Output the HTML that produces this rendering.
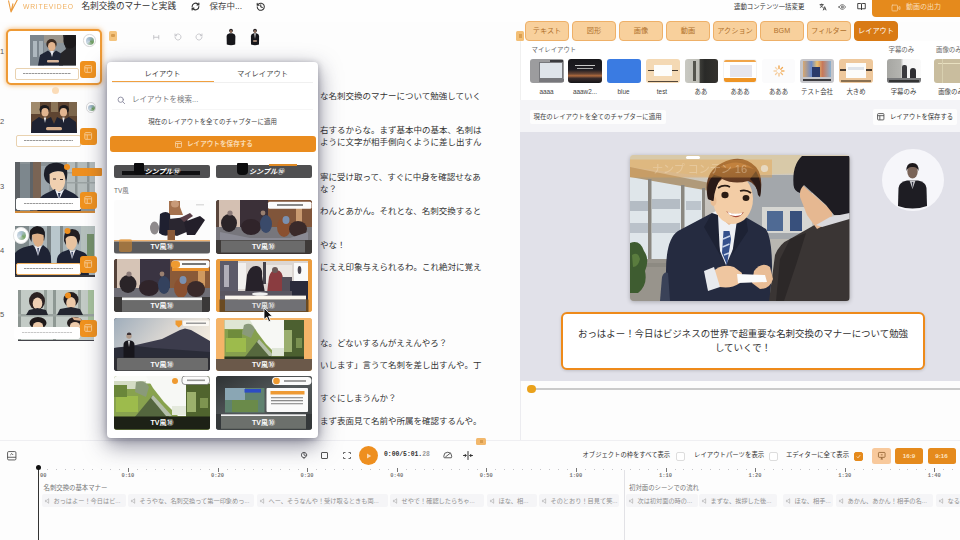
<!DOCTYPE html>
<html lang="ja">
<head>
<meta charset="utf-8">
<title>WriteVideo</title>
<style>
*{box-sizing:border-box;margin:0;padding:0}
html,body{width:960px;height:540px;overflow:hidden;background:#fdfdfd}
body{position:relative;font-family:"Liberation Sans","Noto Sans CJK JP",sans-serif;color:#333;font-size:8px;line-height:1}
.abs{position:absolute}
.t{position:absolute;white-space:nowrap;line-height:1}
svg{position:absolute;overflow:visible}
.or{background:#ee8f1f}
/* top bar */
#top{position:absolute;left:0;top:0;width:960px;height:22px;background:#fefefe}
/* sidebar */
#side{position:absolute;left:0;top:22px;width:104px;height:416px;background:#fdfdfd}
.num{position:absolute;left:0;font-size:7.5px;color:#555}
.sbtn{position:absolute;width:16.5px;height:16.5px;border-radius:3px;background:#f0921e}
.sbtn svg{left:4px;top:4.2px;opacity:.85}
.sub{position:absolute;background:#fff;border:1px solid #e9d2b0;border-radius:2px}
.sub i{position:absolute;left:7px;right:7px;top:50%;height:1px;margin-top:-1px;background:repeating-linear-gradient(90deg,#999 0 2px,#ccc 2px 3px)}
.av{position:absolute;border-radius:50%;background:#fff;border:1px solid #d8d8d8;overflow:hidden}
/* editor */
#editor{position:absolute;left:104px;top:22px;width:390px;height:416px;background:#fefefe}
.ln{position:absolute;left:320px;font-size:8.5px;color:#333;white-space:nowrap;line-height:1;letter-spacing:0}
/* popup */
#popup{position:absolute;left:107px;top:62px;width:211px;height:376px;background:#fff;border-radius:4px;box-shadow:0 7px 22px rgba(40,40,70,.55),0 1px 6px rgba(20,20,40,.3);overflow:hidden}
.cell{position:absolute;width:96px;height:53.5px;border-radius:3px;overflow:hidden;background:#888}
.cell svg{filter:blur(.6px)}
#side>svg{filter:blur(.4px);overflow:hidden}
.cell .lb{position:absolute;left:0;right:0;bottom:0;height:12.5px;background:rgba(70,70,70,.88);color:#fff;font-size:7px;font-weight:bold;text-align:center;line-height:12.5px}
/* right */
#right{position:absolute;left:520px;top:41px;width:440px;height:400px;background:#fff}
.tab{position:absolute;top:20.5px;width:44px;height:20.5px;border-radius:4px;background:#f8d09c;border:1px solid #eeb068;color:#b0702c;font-size:7.2px;text-align:center;line-height:18.6px}
.tab.on{background:#d97a14;border-color:#d97a14;color:#fff}
.th{position:absolute;top:58.5px;height:24px;border-radius:3px;overflow:hidden}
.thl{position:absolute;top:88.5px;font-size:6.4px;color:#444;text-align:center;width:50px;white-space:nowrap}
/* timeline */
#tl{position:absolute;left:0;top:440px;width:960px;height:100px;background:#fdfdfd;box-shadow:inset 0 1px 0 #efeff2}
.tk{position:absolute;top:27.5px;width:1px;height:4px;background:#777}
.tkl{position:absolute;top:34px;font-family:"Liberation Mono",monospace;font-size:5.4px;color:#777;font-weight:bold}
.clip{position:absolute;top:54px;height:13px;background:#f5f5f7;border-radius:2px;color:#909090;font-size:6.2px;line-height:13px;white-space:nowrap;overflow:hidden;padding-left:3px}
.ck{position:absolute;top:11.700px;width:9px;height:9px;border:1px solid #ddd;border-radius:2px;background:#fff}
</style>
</head>
<body>
<div id="top">
  <svg style="left:7px;top:-1px" width="13" height="15" viewBox="0 0 13 15"><path d="M1.5 1.5 L4 13 L10.5 0.5 M4 13 L6 4.5" fill="none" stroke="#eb9a3c" stroke-width="1.1" stroke-linejoin="round"/></svg>
  <div class="t" style="left:22.5px;top:3.6px;font-size:6.6px;letter-spacing:.75px;color:#f0b060;transform:scaleX(1.03);transform-origin:0 0">WRITEVIDEO</div>
  <div class="t" style="left:81.5px;top:2px;font-size:8.6px;color:#333">名刺交換のマナーと実践</div>
  <svg style="left:190.5px;top:2px" width="9" height="9" viewBox="0 0 24 24" fill="none" stroke="#333" stroke-width="3" stroke-linecap="round" stroke-linejoin="round"><path d="M3 12a9 9 0 0 1 15-6.7L21 8M21 3v5h-5M21 12a9 9 0 0 1-15 6.7L3 16M3 21v-5h5"/></svg>
  <div class="t" style="left:209.5px;top:2px;font-size:8.5px;color:#444">保存中...</div>
  <svg style="left:256px;top:1.5px" width="9.5" height="9.5" viewBox="0 0 24 24" fill="none" stroke="#333" stroke-width="2.6" stroke-linecap="round" stroke-linejoin="round"><path d="M3 12a9 9 0 1 0 3-6.7L3 8M3 3v5h5M12 7v5l4 2"/></svg>
  <div class="t" style="left:734px;top:4px;font-size:6.4px;color:#333">連動コンテンツ一括変更</div>
  <svg style="left:818.5px;top:2.5px" width="8" height="8" viewBox="0 0 24 24" fill="none" stroke="#444" stroke-width="2.6" stroke-linecap="round" stroke-linejoin="round"><path d="M3 5h10M8 3v2M5 5c0 4 3 7 7 8M11 5c0 4-3 7-7 8M13 21l4-10 4 10M14.5 18h5"/></svg>
  <svg style="left:837.5px;top:2.5px" width="8.5" height="8" viewBox="0 0 24 24" fill="none" stroke="#555" stroke-width="2.4" stroke-linecap="round" stroke-linejoin="round"><path d="M2 12s4-7 10-7 10 7 10 7-4 7-10 7S2 12 2 12z"/><circle cx="12" cy="12" r="3"/></svg>
  <svg style="left:856.5px;top:2px" width="9" height="9" viewBox="0 0 24 24" fill="none" stroke="#333" stroke-width="2.4" stroke-linecap="round" stroke-linejoin="round"><path d="M3 4h7a2 2 0 0 1 2 2v14a2 2 0 0 0-2-2H3zM21 4h-7a2 2 0 0 0-2 2v14a2 2 0 0 1 2-2h7z"/></svg>
  <div class="abs" style="left:872px;top:0;width:88px;height:17px;background:#e58a1c;border-radius:0 0 0 4px"></div>
  <svg style="left:890.500px;top:3.500px" width="10" height="8" viewBox="0 0 26 22" fill="none" stroke="#f7d4a8" stroke-width="2" stroke-linecap="round" stroke-linejoin="round"><rect x="2" y="3" width="15" height="16" rx="2"/><path d="M20 9l4-2v8l-4-2"/></svg>
  <div class="t" style="left:906px;top:3px;font-size:7px;color:#fadfba">動画の出力</div>
</div>
<div class="tab" style="left:525px">テキスト</div>
<div class="tab" style="left:572px">図形</div>
<div class="tab" style="left:619px">画像</div>
<div class="tab" style="left:666px">動画</div>
<div class="tab" style="left:713px">アクション</div>
<div class="tab" style="left:760px">BGM</div>
<div class="tab" style="left:807px">フィルター</div>
<div class="tab on" style="left:854px">レイアウト</div>
<div class="abs" style="left:516px;top:31px;width:8px;height:10px;border-radius:1.5px;background:#f3bf76"><div class="abs" style="left:2.5px;top:3px;width:3px;height:3.500px;background:#c98a3a;opacity:.6"></div></div>
<div id="right">
  <div class="abs" style="left:0;top:0;width:440px;height:59px;background:#fff;border-left:1px solid #f0f0f0"></div>
  <div class="abs" style="left:0;top:59px;width:440px;height:32px;background:#f4f4f7"></div>
  <div class="abs" style="left:0;top:91px;width:440px;height:249px;background:#e1e1e9"></div>
  <div class="abs" style="left:0;top:340px;width:440px;height:60px;background:#fdfdfd;border-left:1px solid #ececf0"></div>
  <div class="t" style="left:11.500px;top:6px;font-size:6.400px;color:#666">マイレイアウト</div>
  <div class="t" style="left:368.500px;top:6px;font-size:6.400px;color:#666">字幕のみ</div>
  <div class="t" style="left:416px;top:6px;font-size:6.400px;color:#666">画像のみ</div>
</div>
<!-- thumbs (page coords) -->
<div class="th" style="left:529.500px;width:34px;background:#9c9c9e"><div class="abs" style="left:9px;top:3.500px;width:24px;height:17px;background:#dfe4ea;border:1px solid #77787c"></div><div class="abs" style="left:20px;top:1px;width:13px;height:2.500px;background:#3a3a3e"></div><div class="abs" style="left:9px;top:20px;width:25px;height:3px;background:#77777b"></div></div>
<div class="th" style="left:568px;width:33.500px;background:linear-gradient(180deg,#17171b 0,#1e1c22 45%,#6a4634 62%,#b06a3c 70%,#3a2c2c 80%,#141418 100%)"><div class="abs" style="left:7px;top:6px;width:20px;height:1px;background:#c8c8c8"></div><div class="abs" style="left:9px;top:9px;width:16px;height:1px;background:#aaa"></div></div>
<div class="th" style="left:607px;width:33.500px;background:#3a7be2"></div>
<div class="th" style="left:645.500px;width:34px;background:#f4d9b4"><div class="abs" style="left:8px;top:6px;width:18px;height:11px;background:#fdfdfb"></div><div class="abs" style="left:2px;top:11px;width:6px;height:1.500px;background:#443a30"></div><div class="abs" style="left:26px;top:11px;width:6px;height:1.500px;background:#443a30"></div><div class="abs" style="left:2px;top:22px;width:30px;height:1.500px;background:#55483a"></div></div>
<div class="th" style="left:684.500px;width:33px;background:linear-gradient(90deg,#c9c9c2 0,#bdbdb6 42%,#3a3a36 47%,#2a2a28 60%,#34322e 100%)"><div class="abs" style="left:8px;top:2px;width:3px;height:20px;background:#55554e"></div></div>
<div class="th" style="left:723px;width:34px;background:#fff;border:1px solid #f3f3f3"><div class="abs" style="left:0;top:0;width:34px;height:2.500px;background:#f0a54a"></div><div class="abs" style="left:6px;top:5px;width:22px;height:12px;background:#e6e6ee"></div><div class="abs" style="left:0;bottom:0;width:34px;height:3.500px;background:#ee9424"></div></div>
<div class="th" style="left:762px;width:33px;background:#fbfbfc"><svg style="left:10.500px;top:6px" width="12" height="12" viewBox="-6 -6 12 12" stroke-linecap="round" stroke-width="1.300"><g stroke="#f0a040"><path d="M0 -5v2.500"/><path d="M3.500 -3.500l-1.700 1.700" opacity=".9"/><path d="M5 0h-2.500" opacity=".8"/><path d="M3.500 3.500l-1.700 -1.700" opacity=".7"/><path d="M0 5v-2.500" opacity=".6"/><path d="M-3.500 3.500l1.700 -1.700" opacity=".5"/><path d="M-5 0h2.500" opacity=".45"/><path d="M-3.500 -3.500l1.700 1.700" opacity=".4"/></g></svg></div>
<div class="th" style="left:800px;width:34px;background:#c6c6ca"><div class="abs" style="left:3px;top:2.500px;width:28px;height:16px;background:linear-gradient(90deg,#d8a870,#6a8ac8 30%,#e8c070 50%,#c87858 70%,#8ab0d0)"></div><div class="abs" style="left:12px;top:8px;width:8px;height:10px;background:#2a3a6a"></div><div class="abs" style="left:3px;top:20px;width:28px;height:2px;background:#3a3a3e"></div></div>
<div class="th" style="left:839px;width:34px;background:#eec89c"><div class="abs" style="left:7px;top:4px;width:20px;height:15px;background:#fcfcfa"></div><div class="abs" style="left:1px;top:10.500px;width:6px;height:1.500px;background:#4a3c30"></div><div class="abs" style="left:27px;top:10.500px;width:6px;height:1.500px;background:#4a3c30"></div><div class="abs" style="left:9px;top:8px;width:16px;height:3px;background:#dfe4ea"></div><div class="abs" style="left:2px;top:21.500px;width:30px;height:1.500px;background:#8a7050"></div></div>
<div class="th" style="left:886.500px;width:34px;background:linear-gradient(90deg,#a6a6a2 0,#b4b4b0 40%,#f4f4f4 48%,#fafafa 100%)"><div class="abs" style="left:15px;top:6px;width:5px;height:14px;background:#3a3a3e;border-radius:2px 2px 0 0"></div><div class="abs" style="left:23px;top:9px;width:6px;height:12px;background:#2e2e32;border-radius:3px 3px 0 0"></div><div class="abs" style="left:0;top:19px;width:34px;height:5px;background:#77787a"></div><div class="abs" style="left:2px;top:21.500px;width:30px;height:1.500px;background:#333"></div></div>
<div class="th" style="left:934px;width:34px;background:#c9bd9e"><div class="abs" style="left:4px;top:4px;width:26px;height:1px;background:#e8e0c0"></div><div class="abs" style="left:8px;top:0;width:1px;height:24px;background:#d8d0b0"></div></div>
<div class="thl" style="left:521.500px">aaaa</div>
<div class="thl" style="left:560px">aaaw2...</div>
<div class="thl" style="left:598.500px">blue</div>
<div class="thl" style="left:637px">test</div>
<div class="thl" style="left:676px">ああ</div>
<div class="thl" style="left:715px">あああ</div>
<div class="thl" style="left:753.500px">あああ</div>
<div class="thl" style="left:792px">テスト会社</div>
<div class="thl" style="left:831px">大きめ</div>
<div class="thl" style="left:878.500px">字幕のみ</div>
<div class="thl" style="left:926px">画像のみ</div>
<!-- action row -->
<div class="abs" style="left:529.500px;top:109.500px;width:136px;height:14.500px;background:#fdfdfd;border-radius:2px"></div>
<div class="t" style="left:533.500px;top:114.200px;font-size:6.420px;color:#444">現在のレイアウトを全てのチャプターに適用</div>
<div class="abs" style="left:872.500px;top:108.500px;width:84px;height:16.500px;background:#fdfdfd;border-radius:2px"></div>
<svg style="left:877px;top:113px" width="7.500" height="7.500" viewBox="0 0 9 9" fill="none" stroke="#444" stroke-width="1"><rect x=".7" y=".7" width="7.600" height="7.600" rx="1"/><path d="M.7 3.200h7.600M3.400 3.200v5"/></svg>
<div class="t" style="left:890px;top:114.200px;font-size:6.300px;color:#333">レイアウトを保存する</div>
<!-- main image -->
<svg style="left:630px;top:155px;border-radius:4px;overflow:hidden;box-shadow:0 1px 4px rgba(0,0,0,.25)" width="219.500" height="146" viewBox="0 0 219.500 146">
  <defs>
    <linearGradient id="bg1" x1="0" y1="0" x2="0" y2="1"><stop offset="0" stop-color="#d9cdb6"/><stop offset=".25" stop-color="#c9c6c0"/><stop offset="1" stop-color="#b9b5ae"/></linearGradient>
    <linearGradient id="hair" x1="0" y1="0" x2="0" y2="1"><stop offset="0" stop-color="#8a5428"/><stop offset=".6" stop-color="#5a3420"/><stop offset="1" stop-color="#2a1c18"/></linearGradient>
  </defs>
  <rect width="219.500" height="146" fill="url(#bg1)"/>
  <!-- ceiling -->
  <path d="M0 0 H170 V18 L80 22 L0 12Z" fill="#d8c9a8"/>
  <rect x="56" y="1" width="14" height="3" rx="1.500" fill="#fff"/><rect x="138" y="26" width="14" height="3" rx="1.500" fill="#f4f4f0"/>
  <!-- windows -->
  <path d="M0 20 L74 34 V106 H0Z" fill="#dfe6ea"/>
  <path d="M0 12 L80 28 V36 L0 22Z" fill="#b09a7a"/>
  <rect x="18" y="24" width="3.500" height="84" fill="#8a8780"/><rect x="51" y="30" width="3.500" height="78" fill="#8a8780"/><rect x="72" y="33" width="3" height="74" fill="#8a8780"/>
  <rect x="0" y="46" width="18" height="10" fill="#b4bcc4"/><rect x="22" y="44" width="28" height="10" fill="#b4bcc4"/><rect x="56" y="46" width="15" height="9" fill="#bcc4cc"/>
  <rect x="0" y="68" width="18" height="10" fill="#bac2ca"/><rect x="22" y="68" width="28" height="10" fill="#bac2ca"/>
  <path d="M0 104 H76 V146 H0Z" fill="#98948c"/>
  <path d="M0 108 H40 V112 H0Z" fill="#8d8a82"/>
  <!-- plant -->
  <path d="M0 88 Q10 84 14 96 Q20 104 15 116 Q18 130 8 138 L0 138Z" fill="#3e5c30"/>
  <path d="M2 100 Q8 96 10 104 Q8 112 3 112Z" fill="#5a7c3e"/>
  <!-- back wall board -->
  <rect x="116" y="20" width="66" height="86" fill="#a3a7ab"/>
  <rect x="132" y="52" width="50" height="26" fill="#d6d6d2"/>
  <rect x="137" y="56" width="16" height="20" fill="#4f6a94"/><rect x="160" y="56" width="12" height="20" fill="#38507c"/>
  <rect x="130" y="84" width="54" height="30" fill="#b9b7b1"/>
  <!-- centre man -->
  <path d="M34 146 L36 116 Q36 84 48 76 L82 58 L96 66 L112 60 L136 74 Q142 84 142 112 L140 146Z" fill="#252b40"/>
  <path d="M30 146 L32 122 Q34 116 38 118 L40 146Z" fill="#3a4258"/>
  <path d="M82 58 L90 96 L96 110 L104 92 L112 62 L104 56 L90 54Z" fill="#eef0f4"/>
  <path d="M93.500 76 L99.500 76 L101 84 L97 110 L92 98Z" fill="#34508c"/>
  <path d="M93 84 l7 -3 M92.500 92 l7 -3 M94 100 l5 -2" stroke="#c8d4ea" stroke-width="1.400"/>
  <path d="M88 60 L82 58 L74 72 L90 100Z M108 58 L116 62 L118 76 L102 100Z" fill="#1d2234"/>
  <!-- neck/face -->
  <path d="M90 50 H108 V64 L99 70 L90 62Z" fill="#e6b890"/>
  <ellipse cx="103" cy="44" rx="20" ry="25" fill="#f3cda6"/>
  <ellipse cx="83.500" cy="46" rx="3" ry="5" fill="#e9bd94"/>
  <path d="M78 44 Q72 18 92 8 Q112 -2 126 12 Q134 22 130 42 Q126 28 118 26 Q104 30 92 24 Q84 30 83 46Z" fill="url(#hair)"/>
  <path d="M90 12 Q108 2 124 14 Q112 10 100 14Z" fill="#a86a34"/>
  <path d="M78 44 Q75 28 84 20 L92 22 Q85 30 83.500 46Z" fill="#2a1a16"/><path d="M130 42 Q133 28 126 16 L120 24 Q127 30 128 40Z" fill="#2a1a16"/><ellipse cx="95" cy="40" rx="3.600" ry="3.200" fill="#2a1c14"/><ellipse cx="116" cy="43" rx="3.400" ry="3" fill="#2a1c14"/>
  <path d="M88 33 q6 -4 12 -1 M110 36 q6 -2 11 2" stroke="#2a1c14" stroke-width="1.800" fill="none"/>
  <path d="M96 56 Q104 62 114 57 Q106 68 96 56Z" fill="#a84a3a"/><path d="M97.500 57 Q104 60 112.500 57.700 L111 60 Q104 62 99 59.500Z" fill="#fff"/>
  <!-- right man (back) -->
  <path d="M139 146 L145 100 Q150 88 160 84 L188 68 L219.500 60 V146Z" fill="#3a3534"/>
  <path d="M160 84 L176 78 L166 110 L154 146 H146 L150 104Z" fill="#2c2828"/>
  <path d="M170 28 L202 56 L202 66 L187 74 L177 60 L170 42Z" fill="#e6b891"/>
  <path d="M163.500 30 Q162 10 172 1 H219.500 V60 L204 60 L196 50 L174 30 Q170 34 170 38 Q164 36 163.500 30Z" fill="#1e1c22"/>
  <path d="M186 70 L200 62 L219.500 58 V64 L192 72Z" fill="#d9d9dd"/>
  <!-- hands & card -->
  <path d="M82 118 Q90 108 104 112 L112 118 L110 128 Q98 136 84 130Z" fill="#efc6a0"/>
  <path d="M74 116 L84 112 L90 132 L78 136Z" fill="#e8eaee"/>
  <path d="M124 116 Q132 106 140 112 L143 124 Q140 134 130 134 L122 128Z" fill="#e9bd96"/>
  <path d="M107 119 L135 120 L137 127 L108 128Z" fill="#fbfbfb"/>
  <!-- faint orange overlay -->
  <rect x="0" y="4.500" width="142" height="18" fill="#e8a24a" opacity=".42"/>
  <text x="22" y="17.500" font-size="11" fill="#f4e2c8" opacity=".4" font-family="Liberation Sans, Noto Sans CJK JP, sans-serif">ナンプ コンテン  16</text>
  <circle cx="134.500" cy="13.500" r="3.600" fill="#e8e0d0" opacity=".8"/>
</svg>
<!-- avatar circle -->
<div class="abs" style="left:881.500px;top:149px;width:62px;height:62px;border-radius:50%;background:#f6f6fa"></div>
<svg style="left:897px;top:162px" width="31" height="48" viewBox="0 0 31 48">
  <ellipse cx="15.500" cy="9.500" rx="5.200" ry="7" fill="#7a6458"/>
  <path d="M9.500 9 Q9 1 15.500 1 Q22 1 21.500 9 Q20 4.500 15.500 5 Q11 4.500 9.500 9Z" fill="#1c181a"/>
  <path d="M1 44 L1.500 26 Q2 20 10 18.500 L21 18.500 Q29 20 29.500 26 L30 44 Q15.500 49 1 44Z" fill="#1e1d23"/>
  <path d="M12.500 18.500 L15.500 27 L18.500 18.500Z" fill="#c8c8cc"/><path d="M14.800 20 L15.500 27 L16.300 20Z" fill="#3a3a48"/>
</svg>
<!-- subtitle box -->
<div class="abs" style="left:561px;top:312px;width:364px;height:57.500px;border:2px solid #ee8a1a;border-radius:6px;background:#fff;box-shadow:0 1px 3px rgba(0,0,0,.15)"></div>
<div class="t" style="left:561px;width:364px;top:329px;text-align:center;font-size:9.450px;color:#333">おっはよー！今日はビジネスの世界で超重要な名刺交換のマナーについて勉強</div>
<div class="t" style="left:561px;width:364px;top:343px;text-align:center;font-size:9.450px;color:#333">していくで！</div>
<!-- progress -->
<div class="abs" style="left:531px;top:388.200px;width:429px;height:1.600px;background:#cbcbcb"></div>
<div class="abs" style="left:527px;top:384.500px;width:8.500px;height:8.500px;border-radius:50%;background:#eaa21c"></div>
<div id="side" style="top:0;height:440px;background:none">
  <div class="num" style="top:48px">1</div>
  <div class="num" style="top:118px">2</div>
  <div class="num" style="top:183px">3</div>
  <div class="num" style="top:247px">4</div>
  <div class="num" style="top:311px">5</div>
  <!-- scene 1 (selected) -->
  <div class="abs" style="left:6px;top:29px;width:95.5px;height:55.5px;border:2px solid #ee9a35;border-radius:5px;background:#fff;box-shadow:0 0 5px rgba(238,143,31,.7)"></div>
  <svg style="left:30px;top:35px" width="46" height="30.5" viewBox="0 0 46 30.5" preserveAspectRatio="none">
    <rect width="46" height="30.5" fill="#8b949b"/>
    <rect x="0" y="0" width="14" height="30.5" fill="#7c868e"/>
    <rect x="3" y="6" width="4" height="16" fill="#aeb8bf"/><rect x="9" y="6" width="4" height="16" fill="#a5afb6"/>
    <rect x="14" y="0" width="20" height="8" fill="#9a958d"/>
    <ellipse cx="21.5" cy="9" rx="5.2" ry="5" fill="#3a2a22"/>
    <ellipse cx="21.8" cy="11.5" rx="3.8" ry="4.6" fill="#e3b48e"/>
    <path d="M8 30.5 L10 20 L18 15.5 L22 19 L26 15.5 L32 19 L33 30.5Z" fill="#1f2536"/>
    <path d="M20.2 16 L22 22 L23.8 16Z" fill="#e8e8ee"/>
    <rect x="17" y="25" width="12" height="2.6" rx="1" fill="#d9b69a"/>
    <path d="M33 0 H46 V30.5 H29 L31 18 L36 14 L34 8Z" fill="#252427"/>
    <ellipse cx="40" cy="6" rx="6.5" ry="7.5" fill="#1b191b"/>
  </svg>
  <div class="av" style="left:83px;top:34px;width:12.5px;height:12.5px"><div class="abs" style="left:2px;top:2px;width:8px;height:8px;border-radius:50%;background:conic-gradient(#9ab3c4,#6c9a5a,#c8d6e2,#9ab3c4)"></div></div>
  <div class="sub" style="left:15px;top:68px;width:64px;height:11.5px"><i></i></div>
  <div class="sbtn" style="left:79.500px;top:61.200px"><svg width="8.400" height="8" viewBox="0 0 9 9" fill="none" stroke="#fbd9ae" stroke-width="1"><rect x=".7" y=".7" width="7.6" height="7.6" rx="1"/><path d="M.7 3.2h7.6M3.4 3.2v5"/></svg></div>
  <div class="abs" style="left:51.5px;top:87px;width:7px;height:7px;border-radius:50%;background:#fbdcb8"></div>
  <!-- scene 2 -->
  <svg style="left:31px;top:101.5px" width="46" height="31" viewBox="0 0 46 31" preserveAspectRatio="none">
    <rect width="46" height="31" fill="#5e4431"/>
    <rect x="0" y="0" width="9" height="12" fill="#a08a6c"/><rect x="20" y="0" width="7" height="10" fill="#8b7558"/><rect x="38" y="0" width="8" height="14" fill="#7c664c"/>
    <ellipse cx="13.5" cy="7.5" rx="5" ry="4.6" fill="#1d1a1c"/><ellipse cx="14" cy="10.2" rx="3.6" ry="4.2" fill="#e2b590"/>
    <ellipse cx="33" cy="7.5" rx="5" ry="4.6" fill="#1d1a1c"/><ellipse cx="32.5" cy="10.2" rx="3.6" ry="4.2" fill="#e2b590"/>
    <path d="M0 31 L1 20 L8 15 L14 18 L20 15 L23 22 L26 15 L32 18 L38 15 L45 20 L46 31Z" fill="#1e2232"/>
    <path d="M12.8 15.5 L14 21 L15.2 15.5Z M31.3 15.5 L32.5 21 L33.7 15.5Z" fill="#e6e6ea"/>
    <rect x="15" y="25" width="16" height="3.2" rx="1.5" fill="#d8b08e"/>
  </svg>
  <div class="av" style="left:85.5px;top:102px;width:10.5px;height:10.5px"><div class="abs" style="left:1.5px;top:1.5px;width:6.5px;height:6.5px;border-radius:50%;background:conic-gradient(#9ab3c4,#6c9a5a,#c8d6e2,#9ab3c4)"></div></div>
  <div class="sub" style="left:16px;top:134.5px;width:64.5px;height:12px"><i></i></div>
  <div class="sbtn" style="left:80px;top:128px"><svg width="8.400" height="8" viewBox="0 0 9 9" fill="none" stroke="#fbd9ae" stroke-width="1"><rect x=".7" y=".7" width="7.6" height="7.6" rx="1"/><path d="M.7 3.2h7.6M3.4 3.2v5"/></svg></div>
  <!-- scene 3 -->
  <svg style="left:15px;top:161.5px" width="80" height="51" viewBox="0 0 80 51" preserveAspectRatio="none">
    <rect width="80" height="51" fill="#8a9296"/>
    <rect x="0" y="0" width="5" height="51" fill="#5c6064"/>
    <rect x="5" y="2" width="10" height="34" fill="#7d878d"/>
    <rect x="15" y="0" width="3" height="51" fill="#5f6468"/>
    <rect x="18" y="0" width="8" height="51" fill="#7a6454"/>
    <rect x="26" y="4" width="8" height="30" fill="#9aa4aa"/>
    <rect x="52" y="0" width="28" height="40" fill="#b4bcbc"/>
    <rect x="60" y="0" width="2.500" height="40" fill="#8f9797"/><rect x="72" y="0" width="2.500" height="40" fill="#8f9797"/>
    <rect x="52" y="10" width="28" height="1.500" fill="#9aa2a2"/><rect x="52" y="20" width="28" height="1.500" fill="#9aa2a2"/>
    <path d="M29 14 Q28 3 38 1 Q49 -1 52 8 Q53 14 51 19 L48 10 Q42 8 36 11 Q34 16 35 22 Q30 20 29 14Z" fill="#1c1e28"/>
    <path d="M34.500 12 Q40 8 48 10 Q51 14 50 21 Q49 28 43 30 Q37 29 35 22Z" fill="#f0d0b0"/>
    <path d="M38 17 h3 M45 17.500 h3" stroke="#2a2228" stroke-width="1"/>
    <path d="M22 51 L24 38 Q26 33 34 30 L40 27 L44 33 L50 27 L58 31 Q64 34 65 40 L66 51Z" fill="#1e2436"/>
    <path d="M40 27.500 L44 38 L49 27.500 L44 30Z" fill="#eceef2"/>
    <path d="M43 31 L44 38 L45.500 31Z" fill="#2e3a5a"/>
    <circle cx="52" cy="5" r="3" fill="#ee8f1f"/>
  </svg>
  <div class="abs or" style="left:71.5px;top:168px;width:30px;height:8px;border-radius:1px"></div>
  <div class="sub" style="left:16px;top:198px;width:64.5px;height:12px;border-color:#fff"><i></i></div>
  <div class="abs" style="left:15px;top:210.5px;width:80px;height:2px;background:#d08a3a"></div>
  <div class="sbtn" style="left:80px;top:192px"><svg width="8.400" height="8" viewBox="0 0 9 9" fill="none" stroke="#fbd9ae" stroke-width="1"><rect x=".7" y=".7" width="7.6" height="7.6" rx="1"/><path d="M.7 3.2h7.6M3.4 3.2v5"/></svg></div>
  <!-- scene 4 -->
  <svg style="left:15px;top:225.5px" width="80" height="51" viewBox="0 0 80 51" preserveAspectRatio="none">
    <rect width="80" height="51" fill="#a9b4b8"/>
    <rect x="0" y="0" width="14" height="51" fill="#7f8a8c"/>
    <rect x="32" y="0" width="4" height="51" fill="#7c8587"/><rect x="36" y="0" width="9" height="40" fill="#b9c7cc"/><rect x="45" y="0" width="3" height="51" fill="#7f898b"/>
    <rect x="66" y="0" width="14" height="40" fill="#b5c0bd"/><rect x="72" y="8" width="7" height="22" fill="#74906a"/>
    <path d="M14.500 12 Q13.500 1 22 0 Q30.500 0 30 10 L29 15 Q22 6 17 9 L16.500 16Z" fill="#1c1a1e"/>
    <path d="M17 9 Q22 6 28.500 9 Q29.500 15 27 19 Q24 22 21 20.500 Q17.500 17 17 9Z" fill="#dcae86"/>
    <path d="M0 51 L0 27 Q4 22 12 20.500 L18 19 L23 26 L28 19 L33 23 Q36 27 36 34 L37 51Z" fill="#1e2334"/>
    <path d="M19.500 19.500 L23 30 L26.500 19.500 L23 21Z" fill="#e6e6ec"/><path d="M22.300 22 L23 30 L24 22Z" fill="#3a4668"/>
    <path d="M49 15 Q48 4 57 3 Q65.500 3 65 13 L63 19 Q62 11 57 11 Q52 11 51 19Z" fill="#221d21"/>
    <path d="M50.500 13 Q52 9.500 57 10 Q61.500 10 62 15 Q62 21 58 24 Q54 25 51.500 21Z" fill="#e9c3a0"/>
    <path d="M41 51 L42 33 Q43 27 50 25 L54 23.500 L57 29 L61 23.500 L68 26 Q73 28 73 34 L74 51Z" fill="#1f2436"/>
    <path d="M54.500 24 L57 33 L60.500 24 L57 25.500Z" fill="#e6e6ec"/><path d="M56.400 26 L57 33 L58 26Z" fill="#3a4668"/>
    <circle cx="52.5" cy="5" r="3" fill="#ee8f1f"/>
    <rect x="81" y="2" width="5" height="6" rx="1" fill="#ee8f1f"/>
  </svg>
  <div class="av" style="left:12.5px;top:227px;width:16.5px;height:16.5px;border-color:#e4e4e4"><div class="abs" style="left:3px;top:3px;width:9px;height:9px;border-radius:50%;background:conic-gradient(#a9c0cf,#79a566,#d3dee8,#a9c0cf)"></div></div>
  <div class="sub" style="left:16px;top:262.5px;width:64.5px;height:12.5px;border-color:#f0b060"><i></i></div>
  <div class="abs" style="left:15px;top:275px;width:80px;height:1.5px;background:#3a3a40"></div>
  <div class="sbtn" style="left:80px;top:256px"><svg width="8.400" height="8" viewBox="0 0 9 9" fill="none" stroke="#fbd9ae" stroke-width="1"><rect x=".7" y=".7" width="7.6" height="7.6" rx="1"/><path d="M.7 3.2h7.6M3.4 3.2v5"/></svg></div>
  <!-- scene 5 -->
  <svg style="left:17.5px;top:289.5px" width="76" height="51" viewBox="0 0 76 51" preserveAspectRatio="none">
    <rect width="76" height="51" fill="#c3cbc6"/>
    <rect x="0" y="0" width="3" height="51" fill="#8d9692"/><rect x="26" y="0" width="3" height="25" fill="#98a29c"/><rect x="35" y="0" width="3" height="51" fill="#8e9893"/><rect x="60" y="0" width="3" height="25" fill="#98a29c"/><rect x="70" y="0" width="6" height="30" fill="#a6c09c"/>
    <rect x="0" y="24" width="76" height="2.5" fill="#9aa39f"/>
    <ellipse cx="19" cy="11" rx="8" ry="9" fill="#2c2222"/><ellipse cx="19.5" cy="13.5" rx="4.8" ry="6" fill="#efd0b4"/>
    <path d="M8 25 L11 20 L19.5 18 L28 20 L30 25Z" fill="#23252e"/>
    <ellipse cx="53" cy="9.5" rx="7.5" ry="7.5" fill="#231d1f"/><ellipse cx="53" cy="13" rx="4.8" ry="6" fill="#ecc9a8"/>
    <path d="M39 25 L42 19 L53 17 L62 19 L65 25Z" fill="#22252f"/>
    <circle cx="50" cy="5.5" r="3" fill="#ee8f1f"/>
    <ellipse cx="20" cy="33" rx="8.5" ry="6" fill="#1f1a1b"/><ellipse cx="20" cy="36.5" rx="5.2" ry="4.5" fill="#eccaaa"/>
    <ellipse cx="57" cy="33" rx="8" ry="6" fill="#251d1e"/><ellipse cx="57" cy="36.5" rx="5.2" ry="4.5" fill="#eccaaa"/>
    <path d="M54 27 L62 28 L64 31 L56 30Z" fill="#d9b08e"/>
  </svg>
  <div class="sub" style="left:14px;top:326.5px;width:66px;height:12.5px;border-color:#fff"><i style="background:repeating-linear-gradient(90deg,#c8c8c8 0 2px,#e5e5e5 2px 3px)"></i></div>
  <div class="abs" style="left:17.5px;top:339.5px;width:76px;height:1.5px;background:#44444a"></div>
  <div class="sbtn" style="left:80px;top:320px"><svg width="8.400" height="8" viewBox="0 0 9 9" fill="none" stroke="#fbd9ae" stroke-width="1"><rect x=".7" y=".7" width="7.6" height="7.6" rx="1"/><path d="M.7 3.2h7.6M3.4 3.2v5"/></svg></div>
</div>
<div id="editor" style="top:0;height:440px;background:none">
  <div class="abs" style="left:4.5px;top:31px;width:8.5px;height:9.5px;border-radius:1.5px;background:#f4c47e"><div class="abs" style="left:2.5px;top:2.5px;width:3.5px;height:3px;background:#c98a3a;opacity:.7;border-radius:1px"></div></div>
  <svg style="left:48.500px;top:34px" width="6.500" height="6.500" viewBox="0 0 9 9" fill="none" stroke="#b9b9bd" stroke-width="1.1"><path d="M1 1.5v6M8 1.5v6M1 4.5h7"/></svg>
  <svg style="left:69.5px;top:33px" width="8" height="8" viewBox="0 0 24 24" fill="none" stroke="#c2c2c6" stroke-width="2.6" stroke-linecap="round" stroke-linejoin="round"><path d="M3 12a9 9 0 1 0 3-6.7L3 8M3 3v5h5"/></svg>
  <svg style="left:91px;top:33px" width="8" height="8" viewBox="0 0 24 24" fill="none" stroke="#c2c2c6" stroke-width="2.6" stroke-linecap="round" stroke-linejoin="round"><path d="M21 12a9 9 0 1 1-3-6.7L21 8M21 3v5h-5"/></svg>
  <svg style="left:121.5px;top:28px" width="10" height="18" viewBox="0 0 10 18"><circle cx="5" cy="2.6" r="1.9" fill="#2a2526"/><ellipse cx="5" cy="3.4" rx="1.3" ry="1.5" fill="#8a6a58"/><path d="M.8 16.5 L.6 8 Q.8 5.6 3.6 5.2 L6.4 5.2 Q9.2 5.6 9.4 8 L9.2 16.5 Q5 18 .8 16.5Z" fill="#17171b"/></svg>
  <svg style="left:145.5px;top:28px" width="10" height="18" viewBox="0 0 10 18"><circle cx="5" cy="2.6" r="1.9" fill="#2a2526"/><ellipse cx="5" cy="3.4" rx="1.3" ry="1.5" fill="#8a6a58"/><path d="M1 16.5 L.9 8 Q1 5.6 3.6 5.2 L6.4 5.2 Q9 5.6 9.1 8 L9 16.5 Q5 18 1 16.5Z" fill="#17171b"/><path d="M4.2 5.4 L5 11 L5.8 5.4Z" fill="#ddd"/><rect x="3.2" y="12" width="3.6" height="2" fill="#9a8070"/></svg>
</div>
<div class="ln" style="top:91.8px">な名刺交換のマナーについて勉強していく</div>
<div class="ln" style="top:125.5px">右するからな。まず基本中の基本、名刺は</div>
<div class="ln" style="top:137.8px">ように文字が相手側向くように差し出すん</div>
<div class="ln" style="top:172.5px">寧に受け取って、すぐに中身を確認せなあ</div>
<div class="ln" style="top:185.3px">な？</div>
<div class="ln" style="top:207.3px">わんとあかん。それとな、名刺交換すると</div>
<div class="ln" style="top:241.3px">やな！</div>
<div class="ln" style="top:263px">にええ印象与えられるわ。これ絶対に覚え</div>
<div class="ln" style="top:339px">な。どないするんがええんやろ？</div>
<div class="ln" style="top:360.5px">いします」言うて名刺を差し出すんや。丁</div>
<div class="ln" style="top:394px">すぐにしまうんか？</div>
<div class="ln" style="top:416.5px">まず表面見て名前や所属を確認するんや。</div>
<div id="tl">
<svg style="left:7px;top:10.500px" width="9.500" height="9.500" viewBox="0 0 10 10" fill="none" stroke="#444" stroke-width=".9"><rect x=".6" y=".6" width="8.800" height="8.800" rx="1.200"/><path d="M.6 6.600h8.800M3.500 4.200l1.500 -1.500 1.500 1.500"/></svg>
<svg style="left:300px;top:11px" width="8" height="8" viewBox="0 0 24 24" fill="none" stroke="#555" stroke-width="2.600" stroke-linecap="round"><circle cx="12" cy="12" r="8"/><path d="M12 4v8l5 3"/><path d="M12 20v3"/></svg>
<div class="abs" style="left:321px;top:12px;width:7px;height:7px;border:1px solid #555;border-radius:1px"></div>
<svg style="left:342.500px;top:12px" width="8" height="7" viewBox="0 0 8 7" fill="none" stroke="#555" stroke-width=".9"><path d="M.5 2v-1.500h2M5.500 .5h2v1.500M7.500 5v1.500h-2M2.500 6.500h-2v-1.500"/></svg>
<div class="abs" style="left:358.500px;top:6px;width:19px;height:19px;border-radius:50%;background:#ee8f1f"></div>
<svg style="left:365.500px;top:12.500px" width="6" height="6" viewBox="0 0 6 6"><path d="M1 .5l4.200 2.500 -4.200 2.500z" fill="#fbd9b0"/></svg>
<div class="t" style="left:384px;top:12.200px;font-family:'Liberation Mono',monospace;font-size:6.400px;font-weight:bold;color:#333;letter-spacing:-.02px">0:00/5:01.<span style="color:#999">28</span></div>
<svg style="left:442.500px;top:11px" width="9.500" height="8" viewBox="0 0 24 20" fill="none" stroke="#555" stroke-width="2.400" stroke-linejoin="round"><path d="M3 17a8 8 0 0 1-1-4 10 10 0 0 1 20 0 8 8 0 0 1-1 4zM6 15L19 5"/></svg>
<svg style="left:463px;top:10.500px" width="10" height="9" viewBox="0 0 20 18" fill="none" stroke="#333" stroke-width="2" stroke-linecap="round" stroke-linejoin="round"><path d="M10 1v16M1 9h5M4 6.500L6.500 9 4 11.500M19 9h-5M16 6.500L13.500 9 16 11.500"/></svg>
<div class="t" style="left:582.500px;top:11.700px;font-size:6.320px;color:#333">オブジェクトの枠をすべて表示</div>
<div class="ck" style="left:676px"></div>
<div class="t" style="left:694px;top:11.700px;font-size:6.400px;color:#333">レイアウトパーツを表示</div>
<div class="ck" style="left:769px"></div>
<div class="t" style="left:786px;top:11.700px;font-size:6.350px;color:#333">エディターに全て表示</div>
<div class="ck" style="left:854px;background:#e58a1c;border-color:#e58a1c"><svg style="left:1px;top:1px" width="5" height="5" viewBox="0 0 10 10" fill="none" stroke="#fbe0bc" stroke-width="1.800"><path d="M1.500 5.200l2.500 2.500 4.500-5.500"/></svg></div>
<div class="abs" style="left:872px;top:7.500px;width:18.500px;height:16.500px;border-radius:2.500px;background:#f8c99c"></div>
<svg style="left:877.500px;top:12px" width="7.500" height="7.500" viewBox="0 0 10 10" fill="none" stroke="#7a4a1a" stroke-width=".9"><rect x=".6" y=".6" width="8.800" height="6.500" rx="1"/><path d="M3.500 9.400h3M5 7.100v2.300M3.800 3.800h2.400"/></svg>
<div class="abs" style="left:895px;top:7.500px;width:28px;height:16.500px;border-radius:2.500px;background:#e58a1c"></div>
<div class="t" style="left:895px;width:28px;text-align:center;top:12.600px;font-size:6.200px;color:#fde4c4;font-weight:bold">16:9</div>
<div class="abs" style="left:927.500px;top:7.500px;width:28px;height:16.500px;border-radius:2.500px;background:#e58a1c"></div>
<div class="t" style="left:927.500px;width:28px;text-align:center;top:12.600px;font-size:6.200px;color:#fde4c4;font-weight:bold">9:16</div>
<div class="tk" style="left:47.3px;top:28.500px;height:1.500px;background:#c4c4c8"></div>
<div class="tk" style="left:56.2px;top:28.500px;height:1.500px;background:#c4c4c8"></div>
<div class="tk" style="left:65.2px;top:28.500px;height:1.500px;background:#c4c4c8"></div>
<div class="tk" style="left:74.1px;top:28.500px;height:1.500px;background:#c4c4c8"></div>
<div class="tk" style="left:83.1px;top:28.500px;height:1.500px;background:#c4c4c8"></div>
<div class="tk" style="left:92.1px;top:28.500px;height:1.500px;background:#c4c4c8"></div>
<div class="tk" style="left:101.0px;top:28.500px;height:1.500px;background:#c4c4c8"></div>
<div class="tk" style="left:110.0px;top:28.500px;height:1.500px;background:#c4c4c8"></div>
<div class="tk" style="left:118.9px;top:28.500px;height:1.500px;background:#c4c4c8"></div>
<div class="tk" style="left:127.9px"></div>
<div class="tkl" style="left:121.4px">0:10</div>
<div class="tk" style="left:136.9px;top:28.500px;height:1.500px;background:#c4c4c8"></div>
<div class="tk" style="left:145.8px;top:28.500px;height:1.500px;background:#c4c4c8"></div>
<div class="tk" style="left:154.8px;top:28.500px;height:1.500px;background:#c4c4c8"></div>
<div class="tk" style="left:163.7px;top:28.500px;height:1.500px;background:#c4c4c8"></div>
<div class="tk" style="left:172.7px;top:28.500px;height:1.500px;background:#c4c4c8"></div>
<div class="tk" style="left:181.7px;top:28.500px;height:1.500px;background:#c4c4c8"></div>
<div class="tk" style="left:190.6px;top:28.500px;height:1.500px;background:#c4c4c8"></div>
<div class="tk" style="left:199.6px;top:28.500px;height:1.500px;background:#c4c4c8"></div>
<div class="tk" style="left:208.5px;top:28.500px;height:1.500px;background:#c4c4c8"></div>
<div class="tk" style="left:217.5px"></div>
<div class="tkl" style="left:211.0px">0:20</div>
<div class="tk" style="left:226.5px;top:28.500px;height:1.500px;background:#c4c4c8"></div>
<div class="tk" style="left:235.4px;top:28.500px;height:1.500px;background:#c4c4c8"></div>
<div class="tk" style="left:244.4px;top:28.500px;height:1.500px;background:#c4c4c8"></div>
<div class="tk" style="left:253.3px;top:28.500px;height:1.500px;background:#c4c4c8"></div>
<div class="tk" style="left:262.3px;top:28.500px;height:1.500px;background:#c4c4c8"></div>
<div class="tk" style="left:271.3px;top:28.500px;height:1.500px;background:#c4c4c8"></div>
<div class="tk" style="left:280.2px;top:28.500px;height:1.500px;background:#c4c4c8"></div>
<div class="tk" style="left:289.2px;top:28.500px;height:1.500px;background:#c4c4c8"></div>
<div class="tk" style="left:298.1px;top:28.500px;height:1.500px;background:#c4c4c8"></div>
<div class="tk" style="left:307.1px"></div>
<div class="tkl" style="left:300.6px">0:30</div>
<div class="tk" style="left:316.1px;top:28.500px;height:1.500px;background:#c4c4c8"></div>
<div class="tk" style="left:325.0px;top:28.500px;height:1.500px;background:#c4c4c8"></div>
<div class="tk" style="left:334.0px;top:28.500px;height:1.500px;background:#c4c4c8"></div>
<div class="tk" style="left:342.9px;top:28.500px;height:1.500px;background:#c4c4c8"></div>
<div class="tk" style="left:351.9px;top:28.500px;height:1.500px;background:#c4c4c8"></div>
<div class="tk" style="left:360.9px;top:28.500px;height:1.500px;background:#c4c4c8"></div>
<div class="tk" style="left:369.8px;top:28.500px;height:1.500px;background:#c4c4c8"></div>
<div class="tk" style="left:378.8px;top:28.500px;height:1.500px;background:#c4c4c8"></div>
<div class="tk" style="left:387.7px;top:28.500px;height:1.500px;background:#c4c4c8"></div>
<div class="tk" style="left:396.7px"></div>
<div class="tkl" style="left:390.2px">0:40</div>
<div class="tk" style="left:405.7px;top:28.500px;height:1.500px;background:#c4c4c8"></div>
<div class="tk" style="left:414.6px;top:28.500px;height:1.500px;background:#c4c4c8"></div>
<div class="tk" style="left:423.6px;top:28.500px;height:1.500px;background:#c4c4c8"></div>
<div class="tk" style="left:432.5px;top:28.500px;height:1.500px;background:#c4c4c8"></div>
<div class="tk" style="left:441.5px;top:28.500px;height:1.500px;background:#c4c4c8"></div>
<div class="tk" style="left:450.5px;top:28.500px;height:1.500px;background:#c4c4c8"></div>
<div class="tk" style="left:459.4px;top:28.500px;height:1.500px;background:#c4c4c8"></div>
<div class="tk" style="left:468.4px;top:28.500px;height:1.500px;background:#c4c4c8"></div>
<div class="tk" style="left:477.3px;top:28.500px;height:1.500px;background:#c4c4c8"></div>
<div class="tk" style="left:486.3px"></div>
<div class="tkl" style="left:479.8px">0:50</div>
<div class="tk" style="left:495.3px;top:28.500px;height:1.500px;background:#c4c4c8"></div>
<div class="tk" style="left:504.2px;top:28.500px;height:1.500px;background:#c4c4c8"></div>
<div class="tk" style="left:513.2px;top:28.500px;height:1.500px;background:#c4c4c8"></div>
<div class="tk" style="left:522.1px;top:28.500px;height:1.500px;background:#c4c4c8"></div>
<div class="tk" style="left:531.1px;top:28.500px;height:1.500px;background:#c4c4c8"></div>
<div class="tk" style="left:540.1px;top:28.500px;height:1.500px;background:#c4c4c8"></div>
<div class="tk" style="left:549.0px;top:28.500px;height:1.500px;background:#c4c4c8"></div>
<div class="tk" style="left:558.0px;top:28.500px;height:1.500px;background:#c4c4c8"></div>
<div class="tk" style="left:566.9px;top:28.500px;height:1.500px;background:#c4c4c8"></div>
<div class="tk" style="left:575.9px"></div>
<div class="tkl" style="left:569.4px">1:00</div>
<div class="tk" style="left:584.9px;top:28.500px;height:1.500px;background:#c4c4c8"></div>
<div class="tk" style="left:593.8px;top:28.500px;height:1.500px;background:#c4c4c8"></div>
<div class="tk" style="left:602.8px;top:28.500px;height:1.500px;background:#c4c4c8"></div>
<div class="tk" style="left:611.7px;top:28.500px;height:1.500px;background:#c4c4c8"></div>
<div class="tk" style="left:620.7px;top:28.500px;height:1.500px;background:#c4c4c8"></div>
<div class="tk" style="left:629.7px;top:28.500px;height:1.500px;background:#c4c4c8"></div>
<div class="tk" style="left:638.6px;top:28.500px;height:1.500px;background:#c4c4c8"></div>
<div class="tk" style="left:647.6px;top:28.500px;height:1.500px;background:#c4c4c8"></div>
<div class="tk" style="left:656.5px;top:28.500px;height:1.500px;background:#c4c4c8"></div>
<div class="tk" style="left:665.5px"></div>
<div class="tkl" style="left:659.0px">1:10</div>
<div class="tk" style="left:674.5px;top:28.500px;height:1.500px;background:#c4c4c8"></div>
<div class="tk" style="left:683.4px;top:28.500px;height:1.500px;background:#c4c4c8"></div>
<div class="tk" style="left:692.4px;top:28.500px;height:1.500px;background:#c4c4c8"></div>
<div class="tk" style="left:701.3px;top:28.500px;height:1.500px;background:#c4c4c8"></div>
<div class="tk" style="left:710.3px;top:28.500px;height:1.500px;background:#c4c4c8"></div>
<div class="tk" style="left:719.3px;top:28.500px;height:1.500px;background:#c4c4c8"></div>
<div class="tk" style="left:728.2px;top:28.500px;height:1.500px;background:#c4c4c8"></div>
<div class="tk" style="left:737.2px;top:28.500px;height:1.500px;background:#c4c4c8"></div>
<div class="tk" style="left:746.1px;top:28.500px;height:1.500px;background:#c4c4c8"></div>
<div class="tk" style="left:755.1px"></div>
<div class="tkl" style="left:748.6px">1:20</div>
<div class="tk" style="left:764.1px;top:28.500px;height:1.500px;background:#c4c4c8"></div>
<div class="tk" style="left:773.0px;top:28.500px;height:1.500px;background:#c4c4c8"></div>
<div class="tk" style="left:782.0px;top:28.500px;height:1.500px;background:#c4c4c8"></div>
<div class="tk" style="left:790.9px;top:28.500px;height:1.500px;background:#c4c4c8"></div>
<div class="tk" style="left:799.9px;top:28.500px;height:1.500px;background:#c4c4c8"></div>
<div class="tk" style="left:808.9px;top:28.500px;height:1.500px;background:#c4c4c8"></div>
<div class="tk" style="left:817.8px;top:28.500px;height:1.500px;background:#c4c4c8"></div>
<div class="tk" style="left:826.8px;top:28.500px;height:1.500px;background:#c4c4c8"></div>
<div class="tk" style="left:835.7px;top:28.500px;height:1.500px;background:#c4c4c8"></div>
<div class="tk" style="left:844.7px"></div>
<div class="tkl" style="left:838.2px">1:30</div>
<div class="tk" style="left:853.7px;top:28.500px;height:1.500px;background:#c4c4c8"></div>
<div class="tk" style="left:862.6px;top:28.500px;height:1.500px;background:#c4c4c8"></div>
<div class="tk" style="left:871.6px;top:28.500px;height:1.500px;background:#c4c4c8"></div>
<div class="tk" style="left:880.5px;top:28.500px;height:1.500px;background:#c4c4c8"></div>
<div class="tk" style="left:889.5px;top:28.500px;height:1.500px;background:#c4c4c8"></div>
<div class="tk" style="left:898.5px;top:28.500px;height:1.500px;background:#c4c4c8"></div>
<div class="tk" style="left:907.4px;top:28.500px;height:1.500px;background:#c4c4c8"></div>
<div class="tk" style="left:916.4px;top:28.500px;height:1.500px;background:#c4c4c8"></div>
<div class="tk" style="left:925.3px;top:28.500px;height:1.500px;background:#c4c4c8"></div>
<div class="tk" style="left:934.3px"></div>
<div class="tkl" style="left:927.8px">1:40</div>
<div class="tk" style="left:943.3px;top:28.500px;height:1.500px;background:#c4c4c8"></div>
<div class="tk" style="left:952.2px;top:28.500px;height:1.500px;background:#c4c4c8"></div>
<div class="tkl" style="left:40px">00</div>
<div class="abs" style="left:37.600px;top:28px;width:1.200px;height:72px;background:#333"></div>
<div class="abs" style="left:35.500px;top:24.800px;width:5.400px;height:5.400px;border-radius:50%;background:#111"></div>
<div class="abs" style="left:624px;top:30px;width:1px;height:70px;background:#e2e2e6"></div>
<div class="t" style="left:43.500px;top:44.800px;font-size:6.400px;color:#777">名刺交換の基本マナー</div>
<div class="t" style="left:629px;top:44.800px;font-size:6.400px;color:#777">初対面のシーンでの流れ</div>
<div class="clip" style="left:42px;width:84px"><svg style="position:relative;display:inline-block;vertical-align:-1px;margin-right:3px" width="5.500" height="6" viewBox="0 0 6 6" fill="none" stroke="#aaa" stroke-width=".7"><path d="M.5 2.200h1.500l2-1.700v5l-2-1.700h-1.500z"/></svg>おっはよー！今日はビ...</div>
<div class="clip" style="left:128px;width:126px"><svg style="position:relative;display:inline-block;vertical-align:-1px;margin-right:3px" width="5.500" height="6" viewBox="0 0 6 6" fill="none" stroke="#aaa" stroke-width=".7"><path d="M.5 2.200h1.500l2-1.700v5l-2-1.700h-1.500z"/></svg>そうやな、名刺交換って第一印象めっ...</div>
<div class="clip" style="left:257px;width:131px"><svg style="position:relative;display:inline-block;vertical-align:-1px;margin-right:3px" width="5.500" height="6" viewBox="0 0 6 6" fill="none" stroke="#aaa" stroke-width=".7"><path d="M.5 2.200h1.500l2-1.700v5l-2-1.700h-1.500z"/></svg>へー、そうなんや！受け取るときも両...</div>
<div class="clip" style="left:390px;width:94px"><svg style="position:relative;display:inline-block;vertical-align:-1px;margin-right:3px" width="5.500" height="6" viewBox="0 0 6 6" fill="none" stroke="#aaa" stroke-width=".7"><path d="M.5 2.200h1.500l2-1.700v5l-2-1.700h-1.500z"/></svg>せやで！確認したらちゃ...</div>
<div class="clip" style="left:487px;width:50px"><svg style="position:relative;display:inline-block;vertical-align:-1px;margin-right:3px" width="5.500" height="6" viewBox="0 0 6 6" fill="none" stroke="#aaa" stroke-width=".7"><path d="M.5 2.200h1.500l2-1.700v5l-2-1.700h-1.500z"/></svg>ほな、相...</div>
<div class="clip" style="left:539px;width:80px"><svg style="position:relative;display:inline-block;vertical-align:-1px;margin-right:3px" width="5.500" height="6" viewBox="0 0 6 6" fill="none" stroke="#aaa" stroke-width=".7"><path d="M.5 2.200h1.500l2-1.700v5l-2-1.700h-1.500z"/></svg>そのとおり！目見て笑...</div>
<div class="clip" style="left:626px;width:72px"><svg style="position:relative;display:inline-block;vertical-align:-1px;margin-right:3px" width="5.500" height="6" viewBox="0 0 6 6" fill="none" stroke="#aaa" stroke-width=".7"><path d="M.5 2.200h1.500l2-1.700v5l-2-1.700h-1.500z"/></svg>次は初対面の時の...</div>
<div class="clip" style="left:699px;width:78px"><svg style="position:relative;display:inline-block;vertical-align:-1px;margin-right:3px" width="5.500" height="6" viewBox="0 0 6 6" fill="none" stroke="#aaa" stroke-width=".7"><path d="M.5 2.200h1.500l2-1.700v5l-2-1.700h-1.500z"/></svg>まずな、挨拶した後...</div>
<div class="clip" style="left:783px;width:50px"><svg style="position:relative;display:inline-block;vertical-align:-1px;margin-right:3px" width="5.500" height="6" viewBox="0 0 6 6" fill="none" stroke="#aaa" stroke-width=".7"><path d="M.5 2.200h1.500l2-1.700v5l-2-1.700h-1.500z"/></svg>ほな、相手...</div>
<div class="clip" style="left:836px;width:97px"><svg style="position:relative;display:inline-block;vertical-align:-1px;margin-right:3px" width="5.500" height="6" viewBox="0 0 6 6" fill="none" stroke="#aaa" stroke-width=".7"><path d="M.5 2.200h1.500l2-1.700v5l-2-1.700h-1.500z"/></svg>あかん、あかん！相手の名...</div>
<div class="clip" style="left:936px;width:30px"><svg style="position:relative;display:inline-block;vertical-align:-1px;margin-right:3px" width="5.500" height="6" viewBox="0 0 6 6" fill="none" stroke="#aaa" stroke-width=".7"><path d="M.5 2.200h1.500l2-1.700v5l-2-1.700h-1.500z"/></svg>なるほ...</div>
</div>
<div class="abs" style="left:476px;top:437.5px;width:10px;height:7.5px;border-radius:1.5px;background:#f2b86c"><div class="abs" style="left:3.5px;top:2px;width:3px;height:3.5px;background:#c98a3a;opacity:.6"></div></div>
<div id="popup">
  <div class="t" style="left:19px;top:8px;width:73px;text-align:center;font-size:7.2px;color:#333">レイアウト</div>
  <div class="t" style="left:119px;top:8px;width:73px;text-align:center;font-size:7.3px;color:#444">マイレイアウト</div>
  <div class="abs" style="left:5px;top:19.500px;width:201px;height:1px;background:#f0f0f0"></div>
  <div class="abs" style="left:5px;top:18.700px;width:102px;height:1.800px;background:#f0a040"></div>
  <svg style="left:9.500px;top:33.500px" width="8.500" height="8.500" viewBox="0 0 24 24" fill="none" stroke="#8c8ca0" stroke-width="2.6" stroke-linecap="round"><circle cx="10.5" cy="10.5" r="7.5"/><path d="M16 16l5.5 5.500"/></svg>
  <div class="t" style="left:25px;top:34px;font-size:7.500px;color:#7a7a80">レイアウトを検索...</div>
  <div class="abs" style="left:5px;top:46.500px;width:201px;height:1px;background:#f6f6f6"></div>
  <div class="t" style="left:0;top:57px;width:211px;text-align:center;font-size:6.45px;color:#444">現在のレイアウトを全てのチャプターに適用</div>
  <div class="abs" style="left:3px;top:74px;width:205.5px;height:16px;border-radius:3px;background:#ea8c1e"></div>
  <svg style="left:68px;top:78.5px" width="7" height="7" viewBox="0 0 9 9" fill="none" stroke="#f9d9b0" stroke-width="1"><rect x=".7" y=".7" width="7.6" height="7.6" rx="1"/><path d="M.7 3.2h7.6M3.4 3.2v5"/></svg>
  <div class="t" style="left:80px;top:78.6px;font-size:6.600px;color:#f9d9b0;font-weight:bold">レイアウトを保存する</div>
  <!-- simple -->
  <div class="cell" style="left:7px;top:102.5px;height:13px;background:#4f4f51;border-radius:2px;overflow:visible">
    <div class="abs" style="left:8px;top:6px;width:78px;height:4px;background:#101012"></div>
    <div class="abs" style="left:19.5px;top:-1.5px;width:10.5px;height:12px;background:#0c0c0e;border-radius:1px 1px 4px 4px"></div>
    <div class="t" style="left:0;width:96px;top:3px;text-align:center;font-size:7px;font-weight:bold;color:#fff;font-style:italic">シンプル⑩</div>
  </div>
  <div class="cell" style="left:108.5px;top:102.5px;height:13px;background:#4f4f51;border-radius:2px;overflow:visible">
    <div class="abs" style="left:53px;top:-.5px;width:28px;height:1.5px;background:#e08a24"></div>
    <div class="abs" style="left:21.5px;top:-1.5px;width:11px;height:12px;background:#0c0c0e;border-radius:1px 1px 4px 4px"></div>
    <div class="t" style="left:3px;width:96px;top:3px;text-align:center;font-size:7px;font-weight:bold;color:#fff;font-style:italic">シンプル⑩</div>
  </div>
  <div class="t" style="left:7px;top:125.8px;font-size:6.4px;color:#666">TV風</div>
  <!-- TV1 -->
  <div class="cell" style="left:7px;top:138px;background:#fff">
    <svg width="96" height="53.5" viewBox="0 0 96 53.5">
      <rect width="96" height="53.5" fill="#fcfcfc"/>
      <path d="M55 1 h11 v6 l3 8 h-14z" fill="#a5724e"/>
      <ellipse cx="61" cy="4" rx="4" ry="3.5" fill="#c89a78"/>
      <ellipse cx="40.500" cy="28" rx="4.500" ry="6.500" fill="#8e8a8c"/>
      <path d="M46 14 q6 -4 10 0 l1 20 q-6 4 -12 -1z" fill="#1f2030"/>
      <path d="M55 19 l18 -2 l2 14 l-12 5 l-8 -2z" fill="#2a2630"/>
      <path d="M70 22 l16 -6 l5 4 l-10 15 l-8 0z" fill="#231f2a"/>
      <path d="M66 18 l10 -5 l3 3 l-9 6z" fill="#5a4048"/>
      <rect x="53.500" y="30" width="7.500" height="10" fill="#8a5a38"/>
      <rect x="82" y="4" width="8" height="1.500" fill="#ddd"/>
      <rect x="0" y="40" width="96" height="1.500" fill="#eeb474"/>
      <rect x="0" y="41.500" width="96" height="12" fill="#5a5a5c"/>
      <rect x="5" y="39" width="13" height="13" rx="2" fill="#d98a2c" opacity=".55"/>
    </svg>
    <div class="lb" style="background:none">TV風⑩</div>
  </div>
  <!-- TV2 -->
  <div class="cell" style="left:108.5px;top:138px;background:#3c2c26">
    <svg width="96" height="53.5" viewBox="0 0 96 53.5">
      <rect width="96" height="53.5" fill="#3b3038"/>
      <rect x="0" y="0" width="24" height="30" fill="#d4c0b2"/>
      <rect x="0" y="0" width="3" height="53" fill="#5a463c"/>
      <rect x="52" y="0" width="44" height="30" fill="#80553a"/>
      <rect x="80" y="8" width="6" height="20" fill="#c89a70"/>
      <rect x="0" y="27" width="96" height="13" fill="#77767c"/>
      <ellipse cx="13" cy="23" rx="8" ry="9" fill="#2a2428"/><circle cx="14" cy="13" r="2.600" fill="#8a7a78"/>
      <ellipse cx="35" cy="27" rx="10" ry="8" fill="#30242a"/>
      <ellipse cx="50" cy="24" rx="6" ry="9" fill="#3a4a6a"/><circle cx="47" cy="13" r="2.400" fill="#9a8070"/>
      <ellipse cx="68" cy="27" rx="7" ry="10" fill="#8a5030"/><ellipse cx="70" cy="20" rx="3.500" ry="4" fill="#7a90b0"/>
      <ellipse cx="82" cy="29" rx="9" ry="8" fill="#3a2a2a"/>
      <path d="M4 32 l30 6 h40 l18 -6 v8 h-88z" fill="#8a8a94"/>
      <rect x="52" y="1.700" width="43.500" height="7" rx="1.500" fill="#fbfbfb"/>
      <rect x="61" y="4" width="26" height="2" fill="#888"/>
      <rect x="0" y="40" width="96" height="13.500" fill="#3e3a38"/>
      <rect x="5" y="40.500" width="84" height="12" fill="#6b6b6b"/>
    </svg>
    <div class="lb" style="background:none">TV風⑩</div>
  </div>
  <!-- TV3 -->
  <div class="cell" style="left:7px;top:196.750px;background:#3c2c26">
    <svg width="96" height="53.5" viewBox="0 0 96 53.5">
      <rect width="96" height="53.5" fill="#3a3442"/>
      <rect x="2" y="0" width="24" height="30" fill="#d6c4b6"/>
      <rect x="0" y="0" width="3" height="53" fill="#54423a"/>
      <rect x="56" y="0" width="40" height="32" fill="#8a5a38"/>
      <rect x="84" y="10" width="7" height="18" fill="#d09a60"/>
      <rect x="0" y="29" width="96" height="12" fill="#6f6e76"/>
      <ellipse cx="14" cy="25" rx="8.500" ry="9" fill="#2a2428"/><circle cx="15" cy="15" r="2.600" fill="#8a7a78"/>
      <ellipse cx="35" cy="29" rx="10" ry="8" fill="#30242a"/>
      <ellipse cx="50" cy="26" rx="6" ry="9" fill="#34425e"/><circle cx="48" cy="15" r="2.400" fill="#9a8070"/>
      <ellipse cx="67" cy="29" rx="7" ry="10" fill="#8a5030"/><ellipse cx="69" cy="21" rx="3.500" ry="4" fill="#7a90b0"/>
      <ellipse cx="82" cy="30" rx="9" ry="8" fill="#3a2a2a"/>
      <rect x="58" y="1.500" width="37.500" height="7.500" rx="2" fill="#fbfbfb"/>
      <rect x="57" y="2" width="9" height="7" rx="3" fill="#ef9a30"/>
      <rect x="58" y="9" width="37" height="3" fill="#e8902c"/>
      <rect x="68" y="4" width="24" height="2" fill="#777"/>
      <rect x="0" y="38" width="96" height="15.500" fill="#3a3838"/>
      <rect x="8" y="38.400" width="80" height="3" fill="#f4f4f4"/>
      <rect x="8" y="41.400" width="80" height="11.500" fill="#6b6b6b"/>
    </svg>
    <div class="lb" style="background:none">TV風⑩</div>
  </div>
  <!-- TV4 selected -->
  <div class="cell" style="left:108.5px;top:196.750px;background:#e89a3c">
    <svg width="96" height="53.5" viewBox="0 0 96 53.5">
      <rect width="96" height="53.5" fill="#eb9c3e"/>
      <rect x="4" y="2" width="88" height="40" fill="#dcd6d2"/>
      <rect x="4" y="2" width="18" height="40" fill="#5c5a68"/>
      <rect x="8" y="6" width="5" height="22" fill="#b0aeb8"/>
      <rect x="22" y="4" width="8" height="26" fill="#f2f0ee"/>
      <rect x="47" y="3" width="3" height="22" fill="#44424a"/>
      <rect x="50" y="6" width="26" height="18" fill="#ece8e4"/>
      <rect x="78" y="4" width="14" height="22" fill="#fafafa"/>
      <ellipse cx="83.500" cy="11" rx="1.800" ry="4" fill="#4a4650"/>
      <path d="M29 34 l2 -18 q3 -10 10 -9 q6 1 5 10 l3 17z" fill="#27222a"/>
      <path d="M51 34 l2 -16 q2 -8 8 -7 q6 1 6 10 l2 13z" fill="#8a3c40"/><circle cx="59" cy="11" r="3" fill="#6a5a58"/>
      <rect x="66" y="18" width="10" height="16" fill="#55505a"/>
      <rect x="74" y="22" width="18" height="20" fill="#2a2a3a"/>
      <rect x="4" y="32" width="72" height="5" fill="#5a5660"/>
      <ellipse cx="44" cy="35" rx="8" ry="1.800" fill="#f0f0f0"/>
      <rect x="3.500" y="40.500" width="89" height="13" fill="#6a4a22"/>
      <rect x="9" y="36.600" width="81" height="4" fill="#fbf6ee"/>
      <rect x="9" y="40.600" width="81" height="11.500" fill="#707074"/>
    </svg>
    <div class="lb" style="background:none;color:#e8e8e8">TV風⑩</div>
  </div>
  <!-- TV5 fuji -->
  <div class="cell" style="left:7px;top:255.500px;background:#2c2e3a">
    <svg width="96" height="53.5" viewBox="0 0 96 53.5">
      <defs><linearGradient id="sky" x1="0" y1="0" x2="1" y2=".5"><stop offset="0" stop-color="#9fadbb"/><stop offset=".55" stop-color="#d9d6d2"/><stop offset="1" stop-color="#f7efe0"/></linearGradient></defs>
      <rect width="96" height="53.5" fill="url(#sky)"/>
      <path d="M0 30 L22 27 L48 21 L66 12 L71 10.500 L77 12 L96 23 V53.500 H0Z" fill="#3c3c4c"/>
      <path d="M0 30 L22 28 L40 30 L96 34 V53.500 H0Z" fill="#2a2c38"/>
      <circle cx="15" cy="18" r="2.700" fill="#b09a8a"/><path d="M13 15.600 q2 -2 4.200 0 v1.500 h-4.200z" fill="#3a3034"/>
      <path d="M9.500 40 V27 q0 -4 4 -4.500 h3 q4 .5 4 4.500 V40z" fill="#17161c"/>
      <path d="M14 23 l1 6 l1 -6z" fill="#ddd"/>
      <rect x="69" y="2.500" width="26" height="5.500" rx="1" fill="#fbf8f2"/><rect x="72" y="4.500" width="20" height="1.500" fill="#999"/>
      <path d="M61.500 2.500 h6.500 v4 q-3 3 -3.250 3 q-.25 0 -3.250 -3z" fill="#ef9a30"/>
      <rect x="0" y="39.600" width="96" height="14" fill="#2e2e34"/>
      <rect x="3" y="40" width="91" height="12.500" rx="1" fill="#6c6c6c"/>
    </svg>
    <div class="lb" style="background:none">TV風⑩</div>
  </div>
  <!-- TV6 forest orange sides -->
  <div class="cell" style="left:108.500px;top:255.500px;background:#f4b264">
    <svg width="96" height="53.5" viewBox="0 0 96 53.5">
      <rect width="96" height="53.5" fill="#f5b468"/>
      <rect x="8.500" y="2" width="79.500" height="42" fill="#86a04e"/>
      <rect x="8.500" y="2" width="32" height="9" fill="#dfe6d4"/>
      <path d="M34 2 h36 v36 h-8 l-12 -12 l-9 -12z" fill="#f7f8f5"/>
      <path d="M28 7 q7 -4 11 4 l-4 9 l-9 -4z" fill="#8a9a7a"/>
      <rect x="68" y="2" width="20" height="40" fill="#4c6030"/>
      <rect x="68" y="12" width="8" height="22" fill="#9aae6e"/><rect x="80" y="20" width="6" height="10" fill="#7a9050"/>
      <path d="M28 40 l15 -19 l13 19z" fill="#56683e"/>
      <path d="M43 21 l15 17 h-5 l-12 -14z" fill="#b4bea8"/>
      <rect x="10" y="20" width="20" height="14" fill="#9dbb4c"/>
      <rect x="12" y="12" width="14" height="8" fill="#6f8c3c"/>
      <rect x="56" y="30" width="12" height="8" fill="#dfe6d8"/>
      <rect x="8.500" y="38.500" width="79.500" height="3.500" fill="#2c3820"/>
      <rect x="0" y="41" width="96" height="12.500" fill="#6b594a"/>
    </svg>
    <div class="lb" style="background:none">TV風⑩</div>
  </div>
  <!-- TV7 forest full -->
  <div class="cell" style="left:7px;top:314px;background:#7c9844">
    <svg width="96" height="53.5" viewBox="0 0 96 53.5">
      <rect width="96" height="53.5" fill="#88a24e"/>
      <rect x="0" y="0" width="96" height="7.500" fill="#fafbf8"/>
      <rect x="0" y="5" width="32" height="8" fill="#d4dcc4"/>
      <path d="M32 0 h42 v40 h-10 l-14 -14 l-11 -14z" fill="#f7f8f5"/>
      <path d="M22 6 q9 -3 13 5 l-3 10 l-11 -5z" fill="#8a9a7a"/>
      <rect x="72" y="8" width="24" height="34" fill="#50642e"/>
      <rect x="73" y="16" width="9" height="20" fill="#9cb06c"/><rect x="86" y="22" width="8" height="10" fill="#7e9450"/>
      <path d="M20 42 l19 -23 l17 23z" fill="#54663e"/>
      <path d="M39 19 l19 21 h-6 l-15 -18z" fill="#b4beaa"/>
      <rect x="2" y="20" width="22" height="16" fill="#9dbb4c"/>
      <rect x="0" y="9" width="13" height="12" fill="#6a863a"/>
      <rect x="58" y="30" width="14" height="9" fill="#e4e9dc"/>
      <rect x="68" y="0" width="27.500" height="8.500" rx="3" fill="#fbfbfb" stroke="#555" stroke-width=".6"/><rect x="73" y="3.500" width="18" height="1.600" fill="#999"/>
      <circle cx="61" cy="5" r="3" fill="#ef9a30"/>
      <rect x="0" y="40.500" width="96" height="13" fill="#1d2116"/>
    </svg>
    <div class="lb" style="background:none">TV風⑩</div>
  </div>
  <!-- TV8 dark -->
  <div class="cell" style="left:108.500px;top:314px;background:#4c5052">
    <svg width="96" height="53.5" viewBox="0 0 96 53.5">
      <defs><linearGradient id="dk" x1="0" y1="0" x2="1" y2="1"><stop offset="0" stop-color="#2e3234"/><stop offset=".5" stop-color="#555a5c"/><stop offset="1" stop-color="#3a3e40"/></linearGradient></defs>
      <rect width="96" height="53.5" fill="url(#dk)"/>
      <rect x="9" y="12" width="39.500" height="24.500" fill="#5f8270"/>
      <rect x="9" y="12" width="20" height="12" fill="#8aa6b4"/>
      <rect x="16" y="24" width="26" height="12" fill="#6a8a4a"/>
      <rect x="28.500" y="13" width="16.500" height="3.600" fill="#2c4cc4"/>
      <rect x="50.500" y="12" width="41.500" height="24" rx="1" fill="#fafafa"/>
      <rect x="54.500" y="15" width="34" height="3.500" fill="#ee9a34"/>
      <rect x="55" y="21" width="32" height="1.300" fill="#9a9a9a"/><rect x="55" y="24" width="32" height="1.300" fill="#8a8a8a"/><rect x="55" y="27" width="32" height="1.300" fill="#9a9a9a"/>
      <rect x="56" y="1" width="39.500" height="8" rx="4" fill="#fbfbfb"/>
      <circle cx="60.500" cy="5" r="3.300" fill="#ef9a30"/><rect x="68" y="4.200" width="22" height="1.600" fill="#888"/>
      <rect x="0" y="38" width="96" height="15.500" fill="#34383a"/>
      <rect x="5" y="38.300" width="85" height="2" fill="#f1f1f1"/>
      <rect x="5" y="40.300" width="85" height="12.500" fill="#6c706c"/>
    </svg>
    <div class="lb" style="background:none">TV風⑩</div>
  </div>
</div>
<!-- mouse cursor -->
<svg style="left:262.500px;top:307px" width="11" height="16" viewBox="0 0 11 16"><path d="M1 1 L1 12.500 L3.800 10 L5.800 14.800 L7.600 14 L5.600 9.300 L9.400 9.300Z" fill="#111" stroke="#fff" stroke-width=".8" stroke-linejoin="round"/></svg>
</body>
</html>
